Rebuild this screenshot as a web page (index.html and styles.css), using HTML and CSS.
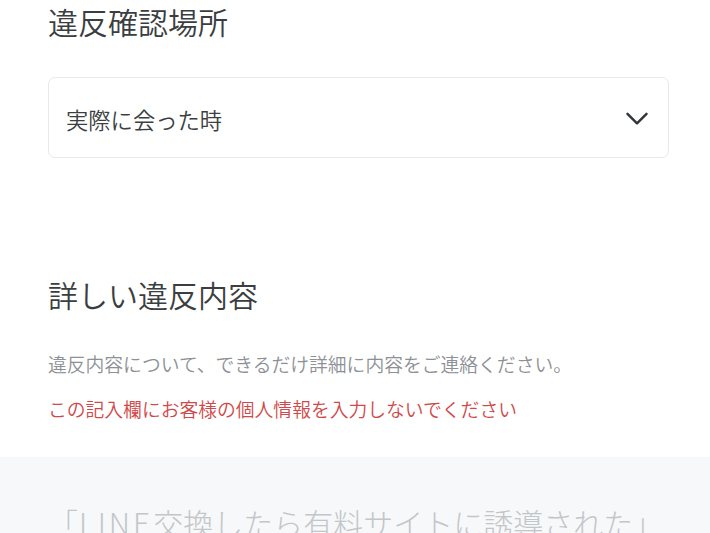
FILE: index.html
```html
<!DOCTYPE html>
<html lang="ja">
<head>
<meta charset="utf-8">
<link rel="stylesheet" href="styles.css">
</head>
<body>
<main class="page">
  <section class="field">
    <h2 class="field-title">違反確認場所</h2>
    <div class="select">
      <span class="select-value">実際に会った時</span>
      <svg class="chevron" width="22" height="14" viewBox="0 0 22 14"><path d="M1.5 1.8 L11 11.3 L20.5 1.8" fill="none" stroke="#333639" stroke-width="2.4" stroke-linecap="round" stroke-linejoin="round"/></svg>
    </div>
  </section>
  <section class="field field-detail">
    <h2 class="field-title">詳しい違反内容</h2>
    <p class="help">違反内容について、できるだけ詳細に内容をご連絡ください。</p>
    <p class="warn">この記入欄にお客様の個人情報を入力しないでください</p>
  </section>
  <div class="textarea">
    <p class="placeholder">「<span class="latin">LINE</span>交換したら有料サイトに誘導された」</p>
  </div>
</main>
</body>
</html>
```
FILE: styles.css
```css
html, body {
  margin: 0;
  padding: 0;
  background: #ffffff;
  overflow: hidden;
}
body {
  font-family: "Noto Sans CJK JP", "Noto Sans", sans-serif;
  color: #3a3d40;
}
.page {
  width: 710px;
  height: 533px;
  overflow: hidden;
}
.field {
  padding: 0 41px 0 48px;
}
.field-title {
  margin: 0;
  font-size: 30px;
  font-weight: 350;
  line-height: 42px;
  color: #3b3e41;
}
.select {
  margin-top: 35px;
  height: 79px;
  border: 1.5px solid #e7e9eb;
  border-radius: 7px;
  display: flex;
  align-items: center;
  justify-content: space-between;
  padding: 0 20px 0 17px;
  box-sizing: content-box;
}
.select-value {
  font-size: 22.3px;
  font-weight: 350;
  line-height: 30px;
  color: #3c3f42;
  margin-top: 3px;
}
.chevron {
  display: block;
  margin-top: 3px;
}
.field-detail {
  margin-top: 115px;
}
.help {
  margin: 35px 0 0;
  font-size: 18.8px;
  font-weight: 350;
  line-height: 28px;
  color: #8d9196;
}
.warn {
  margin: 17px 0 0;
  font-size: 18.8px;
  font-weight: 350;
  line-height: 28px;
  color: #d0494a;
}
.textarea {
  margin-top: 34px;
  background: #f7f8f9;
  padding: 43px 0 0 48px;
  height: 200px;
}
.placeholder {
  margin: 0;
  font-size: 30px;
  font-weight: 300;
  line-height: 45px;
  color: #c3c6c9;
  white-space: nowrap;
}
.latin {
  letter-spacing: 3px;
  margin-left: 1px;
}
```
